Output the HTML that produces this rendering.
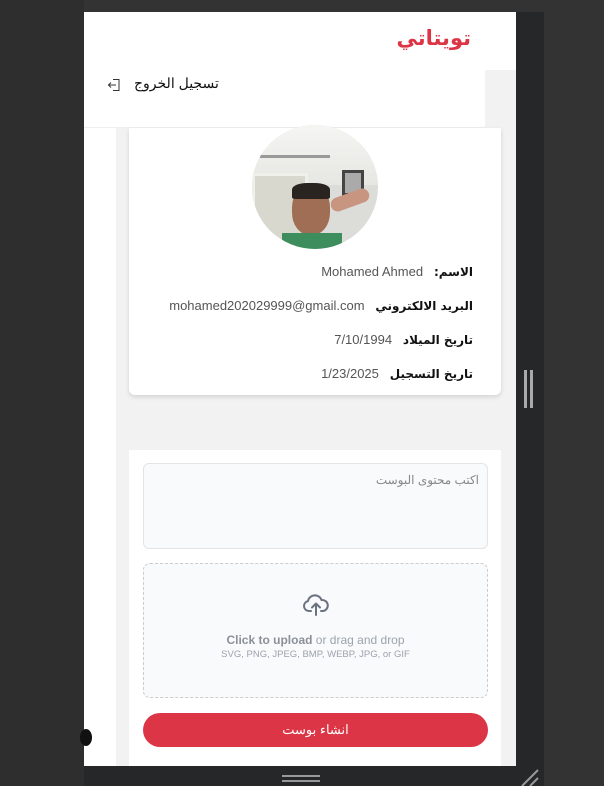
<!DOCTYPE html>
<html><head><meta charset="utf-8"><style>
*{margin:0;padding:0;box-sizing:border-box}
body{width:604px;height:786px;background:#333;position:relative;overflow:hidden;font-family:"Liberation Sans","Noto Sans CJK SC",sans-serif}
.a{position:absolute}
b.l{color:#111;font-family:'DejaVu Sans',sans-serif;font-size:12px}
</style></head><body>
<div class="a" style="left:0;top:0;width:84px;height:786px;background:#2e2e2e"></div>
<div class="a" style="left:516px;top:12px;width:28px;height:774px;background:#262728"></div>
<div class="a" style="left:84px;top:766px;width:460px;height:20px;background:#262728"></div>
<div class="a" style="left:282px;top:775px;width:38px;height:2px;background:#999"></div>
<div class="a" style="left:282px;top:780px;width:38px;height:2px;background:#999"></div>
<div class="a" style="left:524px;top:370px;width:3px;height:38px;background:#aaa"></div>
<div class="a" style="left:530px;top:370px;width:3px;height:38px;background:#aaa"></div>
<svg class="a" style="left:518px;top:766px" width="24" height="20"><path d="M4 20 L20 4 M12 20 L20 12" stroke="#999" stroke-width="2"/></svg>
<div class="a" style="left:84px;top:12px;width:432px;height:754px;background:#fff;overflow:hidden">
  <div class="a" style="right:45px;top:14px;color:#dc3545;font-weight:bold;font-size:21px;direction:rtl;font-family:'DejaVu Sans',sans-serif">تويتاتي</div>
  <div class="a" style="left:401px;top:58px;width:31px;height:700px;background:#f2f2f2"></div>
  <div class="a" style="left:32px;top:94px;width:400px;height:660px;background:#f2f2f2"></div>
  <div class="a" style="left:0;top:58px;width:401px;height:58px;background:#fff;border-bottom:1px solid #eee"></div>
  <div class="a" style="left:50px;top:63px;font-size:14px;color:#111;direction:rtl">تسجيل الخروج</div>
  <svg class="a" style="left:23px;top:66px" width="14" height="14" viewBox="0 0 14 14" fill="none" stroke="#333" stroke-width="1"><path d="M6 1.5h6v11H6M9 7H1.5M4 4.5L1.5 7 4 9.5"/></svg>
  <div class="a" style="left:45px;top:116px;width:372px;height:267px;background:#fff;border-radius:0 0 6px 6px;box-shadow:0 2px 5px rgba(0,0,0,.13)"></div>
  <div class="a" style="left:168px;top:113px;width:126px;height:124px;border-radius:50%;overflow:hidden;background:#dcdcd8">
    <div class="a" style="left:0;top:0;width:126px;height:60px;background:linear-gradient(#f5f5f3,#e6e6e2)"></div>
    <div class="a" style="left:8px;top:30px;width:70px;height:3px;background:#999"></div>
    <div class="a" style="left:0;top:48px;width:56px;height:70px;background:#d8d8cf;border:3px solid #f0f0ea"></div>
    <div class="a" style="left:90px;top:45px;width:22px;height:26px;background:#aaa;border:3px solid #444"></div>
    <div class="a" style="left:40px;top:60px;width:38px;height:50px;border-radius:45%;background:#a06e55"></div>
    <div class="a" style="left:40px;top:58px;width:38px;height:16px;border-radius:40% 40% 10% 10%;background:#2a2420"></div>
    <div class="a" style="left:78px;top:68px;width:40px;height:14px;border-radius:8px;background:#c79580;transform:rotate(-20deg)"></div>
    <div class="a" style="left:30px;top:108px;width:60px;height:20px;background:#3d8d5d"></div>
  </div>
  <div class="a" style="right:43px;top:243px;width:340px;direction:rtl;font-size:13px;line-height:34px;color:#555">
    <div><b class="l">الاسم:</b>&nbsp;&nbsp;&nbsp;Mohamed Ahmed</div>
    <div><b class="l">البريد الالكتروني</b>&nbsp;&nbsp;&nbsp;mohamed202029999@gmail.com</div>
    <div><b class="l">تاريخ الميلاد</b>&nbsp;&nbsp;&nbsp;7/10/1994</div>
    <div><b class="l">تاريخ التسجيل</b>&nbsp;&nbsp;&nbsp;1/23/2025</div>
  </div>
  <div class="a" style="left:45px;top:438px;width:372px;height:316px;background:#fff"></div>
  <div class="a" style="left:59px;top:451px;width:345px;height:86px;background:#f9fafb;border:1px solid #e2e4e8;border-radius:6px"></div>
  <div class="a" style="right:37px;top:461px;font-size:12px;color:#888;direction:rtl">اكتب محتوى البوست</div>
  <div class="a" style="left:59px;top:551px;width:345px;height:135px;background:#f9fafb;border:1.5px dashed #ccc;border-radius:7px"></div>
  <svg class="a" style="left:218px;top:581px" width="28" height="24" viewBox="0 0 28 24" fill="none" stroke="#6b7280" stroke-width="2" stroke-linecap="round" stroke-linejoin="round"><path d="M9 18H7a5 5 0 0 1-1-9.9A7 7 0 0 1 19.5 7 5 5 0 0 1 21 18h-2M14 22V11M10 14.5l4-4 4 4"/></svg>
  <div class="a" style="left:59px;top:621px;width:345px;text-align:center;font-size:12px;color:#9ca3af"><b style="color:#8b909a">Click to upload</b> or drag and drop</div>
  <div class="a" style="left:59px;top:637px;width:345px;text-align:center;font-size:9.5px;color:#9ca3af">SVG, PNG, JPEG, BMP, WEBP, JPG, or GIF</div>
  <div class="a" style="left:59px;top:701px;width:345px;height:34px;background:#dc3545;border-radius:17px;color:#fff;text-align:center;line-height:34px;font-size:13px;direction:rtl">انشاء بوست</div>
</div>
<div class="a" style="left:80px;top:729px;width:12px;height:17px;border-radius:50%;background:#111"></div>
</body></html>
